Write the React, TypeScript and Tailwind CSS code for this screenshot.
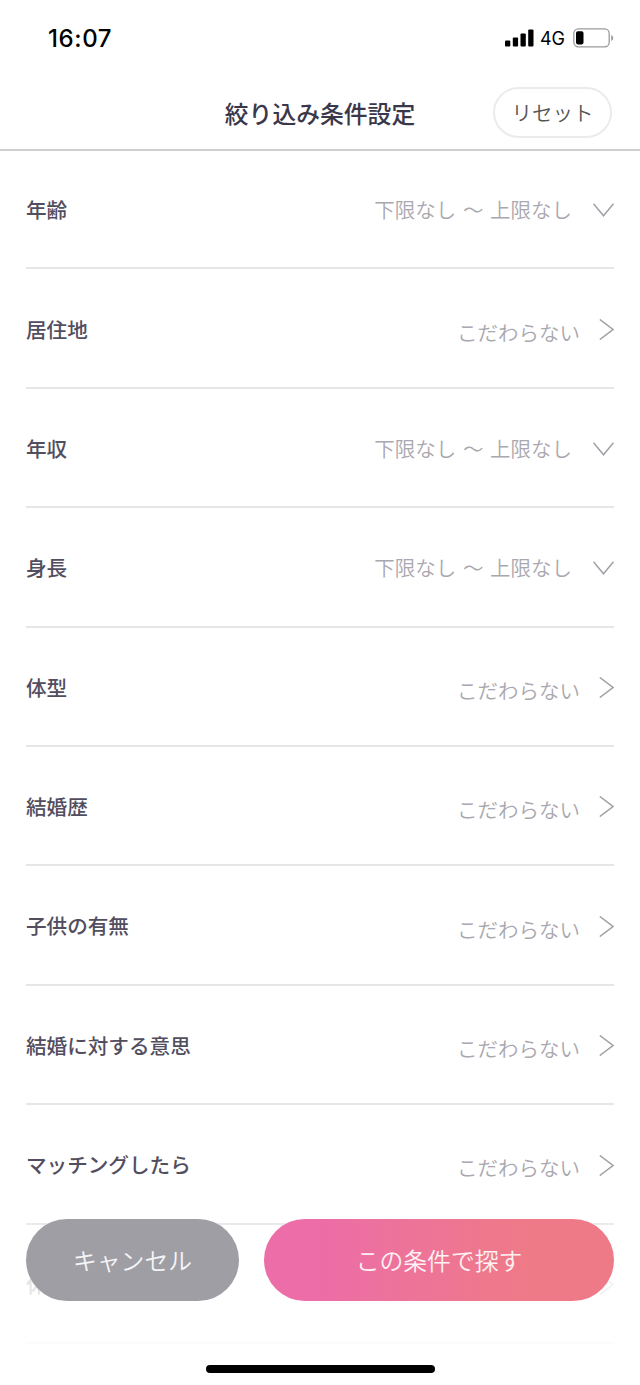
type Condition = {
  label: string;
  value?: string;
  type: 'range' | 'link';
};

const RANGE = '下限なし 〜 上限なし';
const ANY = 'こだわらない';

const conditions: Condition[] = [
  { label: '年齢', value: RANGE, type: 'range' },
  { label: '居住地', value: ANY, type: 'link' },
  { label: '年収', value: RANGE, type: 'range' },
  { label: '身長', value: RANGE, type: 'range' },
  { label: '体型', value: ANY, type: 'link' },
  { label: '結婚歴', value: ANY, type: 'link' },
  { label: '子供の有無', value: ANY, type: 'link' },
  { label: '結婚に対する意思', value: ANY, type: 'link' },
  { label: 'マッチングしたら', value: ANY, type: 'link' },
  { label: '休', type: 'link' },
];

function StatusBar() {
  return (
    <div className="flex h-[76px] items-center justify-between pl-12 pr-[26px] font-['Inter','Liberation_Sans',sans-serif] text-black">
      <span className="pt-0.5 text-[24px] font-medium leading-none tracking-[0.6px]">16:07</span>
      <div className="flex items-center">
        <svg className="h-[18px] w-[29px]" viewBox="0 0 29 18" fill="currentColor">
          <rect x="0" y="11.5" width="5.3" height="6" rx="1" />
          <rect x="7.8" y="8.5" width="5.3" height="9" rx="1" />
          <rect x="15.5" y="4.5" width="5.3" height="13" rx="1" />
          <rect x="23.2" y="0.5" width="5.3" height="17" rx="1" />
        </svg>
        <span className="ml-1.5 pt-0.5 text-[18px] leading-none">4G</span>
        <svg className="ml-2 h-5 w-[41px]" viewBox="0 0 41 20" fill="none">
          <rect x="0.8" y="0.8" width="35.4" height="18" rx="4.5" stroke="#9b9b9b" strokeWidth="1.3" />
          <rect x="3" y="3.2" width="7.5" height="13.2" rx="1.8" fill="#000" />
          <path d="M38.2 7v6c1.2-.5 2-1.7 2-3s-.8-2.5-2-3z" fill="#9b9b9b" />
        </svg>
      </div>
    </div>
  );
}

function Header() {
  return (
    <div className="grid h-[75px] grid-cols-[1fr_auto_1fr] items-center border-b-2 border-[#cfcfcf] px-7">
      <h1 className="col-start-2 text-[23.8px] font-medium leading-none text-[#3b374a]">
        絞り込み条件設定
      </h1>
      <button className="h-[51px] w-[119px] justify-self-end rounded-full border-2 border-[#ebebeb] text-[20.5px] font-[350] leading-none text-[#555]">
        リセット
      </button>
    </div>
  );
}

function ConditionRow({ label, value, type }: Condition) {
  return (
    <li className="flex h-[119.4px] items-center justify-between border-b-2 border-[#e6e6e8] pt-[1.5px] leading-none">
      <span className="text-[20.6px] font-medium text-[#524e60]">{label}</span>
      {type === 'range' ? (
        <div className="flex items-center gap-[21px]">
          <span className="text-[20.5px] font-[350] text-[#a9a8af] [word-spacing:2px]">{value}</span>
          <svg className="mt-px h-3.5 w-[21px]" viewBox="0 0 21 14" fill="none" stroke="#a09fa6" strokeWidth="1.5">
            <path d="M0.5 0.8l10 12 10-12" />
          </svg>
        </div>
      ) : (
        <div className="flex items-center gap-[19px]">
          {value && <span className="pt-1.5 text-[20.5px] font-[350] text-[#a9a8af]">{value}</span>}
          <svg className="mt-px h-[21px] w-[15px]" viewBox="0 0 15 21" fill="none" stroke="#a09fa6" strokeWidth="1.5">
            <path d="M0.8 0.5l13.2 10-13.2 10" />
          </svg>
        </div>
      )}
    </li>
  );
}

export default function App() {
  return (
    <main className="relative h-[1385px] w-full overflow-hidden bg-white font-['Noto_Sans_CJK_JP',sans-serif]">
      <StatusBar />
      <Header />

      <ul className="-mt-px px-[26px]">
        {conditions.map((condition) => (
          <ConditionRow key={condition.label} {...condition} />
        ))}
      </ul>

      {/* Fixed footer, the list fades out underneath */}
      <div className="absolute inset-x-0 bottom-0 flex h-[175px] flex-col items-center justify-between bg-linear-to-b from-white/0 via-white/84 via-40% to-white/92 px-[26px] pb-3 pt-[9px]">
        <div className="flex w-full gap-[25px]">
          <button className="h-[82px] w-[213px] rounded-full bg-[#9f9ea5] text-[23.8px] font-[350] leading-none text-white/90">
            キャンセル
          </button>
          <button className="h-[82px] flex-1 rounded-full bg-linear-to-r from-[#ec6da7] from-15% to-[#ef7a87] to-75% text-[23.8px] font-[350] leading-none text-white/90">
            この条件で探す
          </button>
        </div>
        <div className="h-2 w-[229px] rounded-full bg-black" />
      </div>
    </main>
  );
}
